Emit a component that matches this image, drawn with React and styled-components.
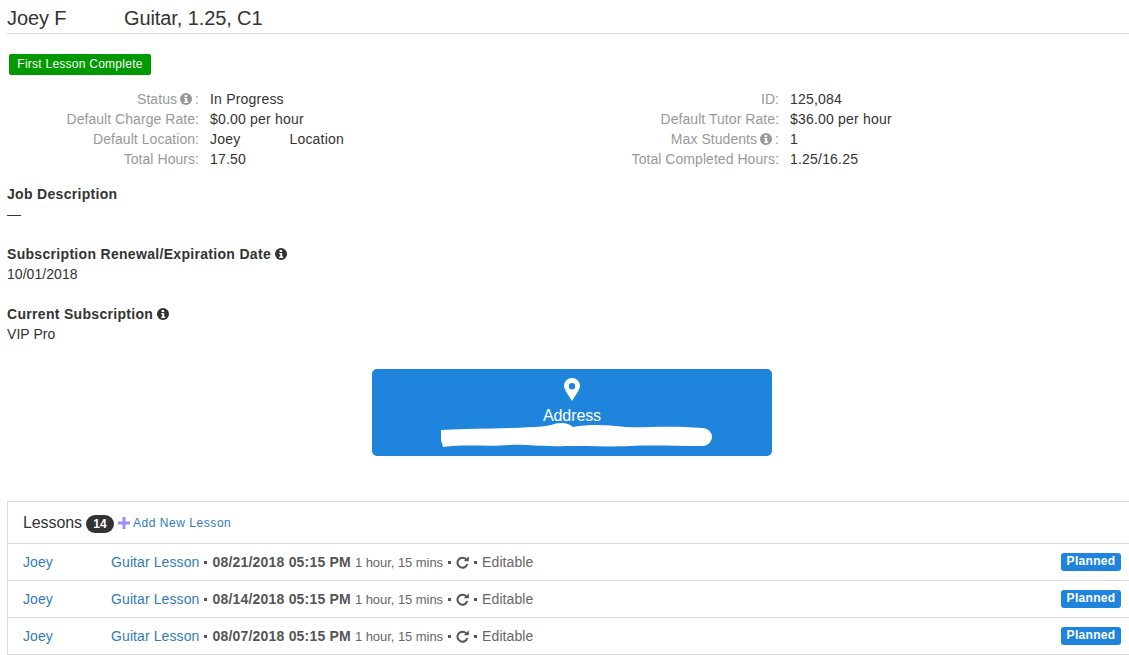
import React from "react";
import styled, { createGlobalStyle } from "styled-components";

const Global = createGlobalStyle`
  html, body { margin: 0; padding: 0; background: #fff; overflow: hidden; }
  body { font-family: "Liberation Sans", Arial, sans-serif; font-size: 14px; color: #333; letter-spacing: 0.05px; }
  a { color: #337ab7; text-decoration: none; }
`;
const Page = styled.div`width: 1129px; height: 655px; overflow: hidden; padding-left: 7px; box-sizing: border-box;`;
const Header = styled.div`display: flex; height: 33px; border-bottom: 1px solid #ddd; font-size: 20px; line-height: 36px; letter-spacing: -0.1px; color: #333;`;
const Name = styled.div`width: 117px;`;
const Tag = styled.div`margin: 20px 0 0 2px; width: 142px; height: 21px; box-sizing: border-box; background: #090; border-radius: 2px; color: #fff; font-size: 12px; line-height: 21px; text-align: center; letter-spacing: 0.25px;`;
const Grid = styled.div`display: grid; grid-template-columns: 580px 340px; margin-top: 14px;`;
const Row = styled.div`display: flex; height: 20px; line-height: 20px;`;
const Label = styled.div`width: 192px; flex: none; text-align: right; color: #999; display: flex; justify-content: flex-end; align-items: center; gap: 3px; white-space: nowrap;`;
const Value = styled.div`margin-left: 11px; color: #333; white-space: pre; letter-spacing: 0.2px;`;
const Section = styled.div`margin-top: ${p => p.$top}px; line-height: 20px;`;
const Title = styled.div`font-weight: 700; display: flex; align-items: center; gap: 4px; letter-spacing: 0.31px;`;
const AddressCard = styled.div`margin: 25px 0 0 365px; width: 400px; height: 87px; border-radius: 5px; background: #1f85dc; color: #fff; display: flex; flex-direction: column; align-items: center; padding-top: 9px; box-sizing: border-box; position: relative;`;
const AddressText = styled.div`font-size: 16px; line-height: 20px; margin-top: 5px; letter-spacing: -0.1px;`;
const Scribble = styled.svg`position: absolute; left: 69px; top: 54px;`;
const Panel = styled.div`margin-top: 45px; width: 1123px; border: 1px solid #ddd; box-sizing: border-box;`;
const PanelHead = styled.div`height: 41px; display: flex; align-items: center; padding-left: 15px; font-size: 16px; letter-spacing: -0.1px;`;
const Count = styled.span`margin-left: 4px; width: 28px; height: 18px; border-radius: 9px; background: #333; color: #fff; font-size: 12px; font-weight: 700; line-height: 18px; text-align: center; letter-spacing: 0; margin-top: 3px;`;
const AddLink = styled.a`display: flex; align-items: center; margin-left: 4px; font-size: 12px; letter-spacing: 0.55px; gap: 3px;`;
const LessonRow = styled.div`height: 36px; border-top: 1px solid #ddd; display: flex; align-items: center; padding-left: 15px; color: #666; white-space: pre; letter-spacing: 0.1px;`;
const Student = styled.a`width: 88px;`;
const Dot = styled.span`margin: 0 5px; display: inline-block; width: 3px; height: 3px; background: #555;`;
const Strong = styled.b`color: #555; letter-spacing: 0.2px;`;
const Duration = styled.span`margin-left: 4px; font-size: 13px; letter-spacing: -0.05px;`;
const Status = styled.span`margin-left: auto; margin-right: 8px; width: 60px; height: 18px; border-radius: 3px; background: #1f85dc; color: #fff; font-size: 12px; font-weight: 700; line-height: 17px; text-align: center; letter-spacing: 0.3px;`;
const Editable = styled.span`color: #666;`;

const Info = ({ color = "#333" }) => (
  <svg width="12" height="12" viewBox="0 0 12 12" aria-hidden="true">
    <circle cx="6" cy="6" r="6" fill={color} />
    <rect x="4.6" y="2" width="2.6" height="2" fill="#fff" />
    <path d="M4.2 5h3v3.6h1V10H4.2V8.6h1V6.3h-1z" fill="#fff" />
  </svg>
);
const Refresh = () => (
  <svg width="13" height="13" viewBox="0 0 13 13" aria-hidden="true">
    <path d="M10.3 3.4A5 5 0 1 0 11.3 8" fill="none" stroke="#555" strokeWidth="2" />
    <path d="M7.8 5.2h5V.3z" fill="#555" />
  </svg>
);
const Pin = () => (
  <svg width="16" height="23" viewBox="0 0 16 23" aria-hidden="true">
    <path fillRule="evenodd" fill="#fff" d="M8 0a8 8 0 0 1 8 8c0 3.6-5.4 10.700-8 15C5.400 18.700 0 11.600 0 8a8 8 0 0 1 8-8zm0 5a3.200 3.200 0 1 0 0 6.400A3.200 3.200 0 0 0 8 5z" />
  </svg>
);
const Plus = () => (
  <svg width="12" height="12" viewBox="0 0 12 12" aria-hidden="true">
    <path d="M4.500 0h3v4.500H12v3H7.500V12h-3V7.500H0v-3h4.500z" fill="#9d90f0" />
  </svg>
);

const left = [
  [<>Status <Info color="#999" /> :</>, "In Progress"],
  ["Default Charge Rate:", "$0.00 per hour"],
  ["Default Location:", "Joey            Location"],
  ["Total Hours:", "17.50"],
];
const right = [
  ["ID:", "125,084"],
  ["Default Tutor Rate:", "$36.00 per hour"],
  [<>Max Students <Info color="#999" /> :</>, "1"],
  ["Total Completed Hours:", "1.25/16.25"],
];
const lessons = ["08/21/2018", "08/14/2018", "08/07/2018"];

export default function App() {
  return (
    <Page>
      <Global />
      <Header><Name>Joey F</Name><div>Guitar, 1.25, C1</div></Header>
      <Tag>First Lesson Complete</Tag>
      <Grid>
        {[left, right].map((col, c) => (
          <div key={c}>
            {col.map(([l, v], i) => (
              <Row key={i}><Label>{l}</Label><Value>{v}</Value></Row>
            ))}
          </div>
        ))}
      </Grid>
      <Section $top={15}><Title>Job Description</Title><div>—</div></Section>
      <Section $top={20}><Title>Subscription Renewal/Expiration Date <Info /></Title><div>10/01/2018</div></Section>
      <Section $top={20}><Title>Current Subscription <Info /></Title><div>VIP Pro</div></Section>
      <AddressCard>
        <Pin />
        <AddressText>Address</AddressText>
        <Scribble width="272" height="24" viewBox="0 0 272 24" aria-hidden="true">
          <path d="M0 7C30 5 60 6 90 4C100 4 108 3 113 1C120-1 128 0 132 4C150 1 165 2 185 4C205 5 225 2 262 5A9 9 0 0 1 262 23C235 23 210 22 190 23C165 24 145 23 125 23C100 24 85 21 70 22C45 24 25 21 2 24L0 17Z" fill="#fff" />
        </Scribble>
      </AddressCard>
      <Panel>
        <PanelHead>Lessons<Count>14</Count><AddLink href="#"><Plus />Add New Lesson</AddLink></PanelHead>
        {lessons.map(d => (
          <LessonRow key={d}>
            <Student href="#">Joey</Student>
            <a href="#">Guitar Lesson</a><Dot /><Strong>{d} 05:15 PM</Strong>
            <Duration>1 hour, 15 mins</Duration><Dot /><Refresh /><Dot /><Editable>Editable</Editable>
            <Status>Planned</Status>
          </LessonRow>
        ))}
      </Panel>
    </Page>
  );
}
